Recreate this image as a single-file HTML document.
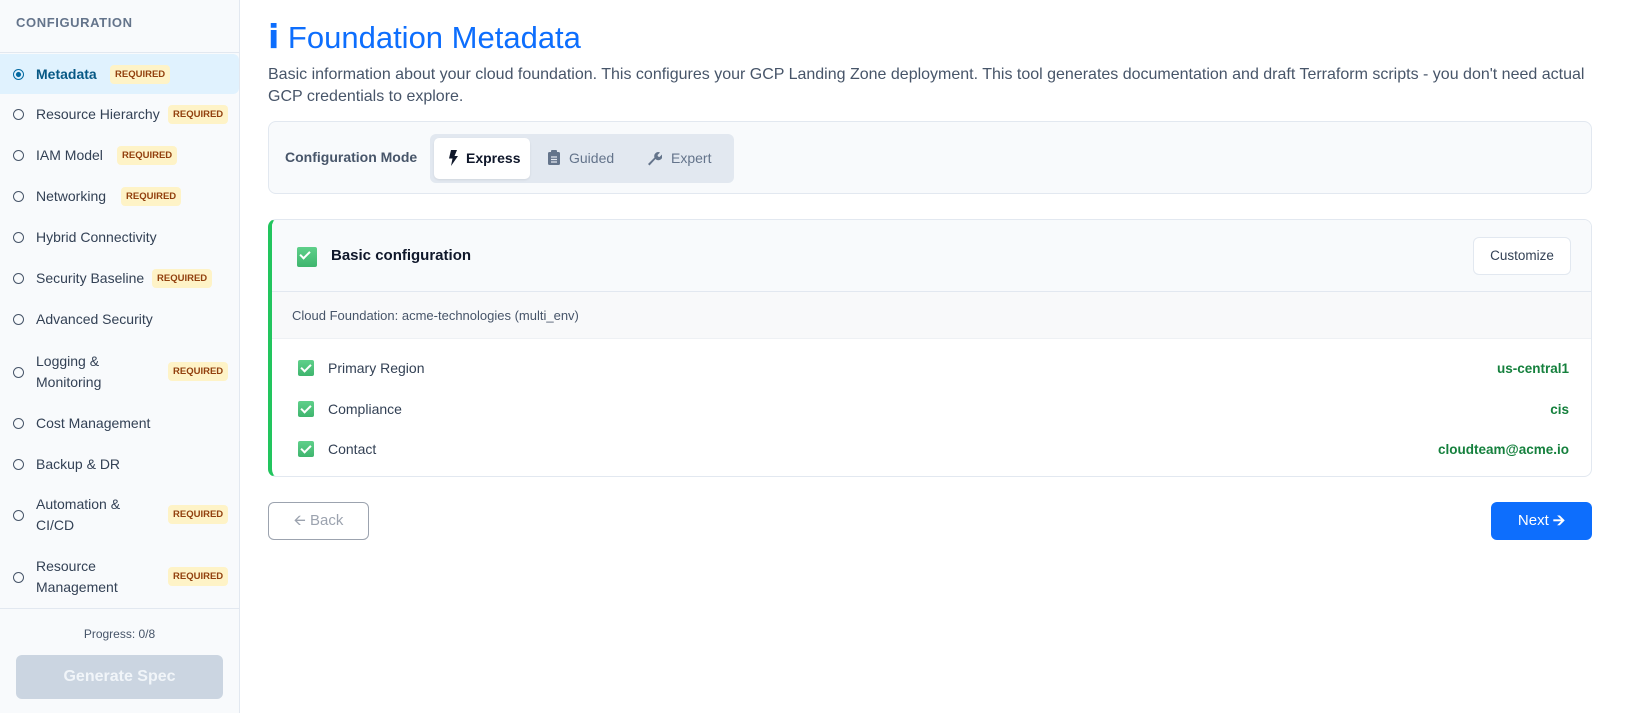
<!DOCTYPE html>
<html><head><meta charset="utf-8"><style>
*{box-sizing:border-box;margin:0;padding:0}
body{width:1632px;height:713px;overflow:hidden;background:#fff;font-family:"Liberation Sans",sans-serif;position:relative;color:#1e293b}
.sb{position:absolute;left:0;top:0;width:240px;height:713px;background:#f8fafc;border-right:1px solid #e2e8f0}
.sbh{position:absolute;left:16px;top:15px;font-size:13px;font-weight:bold;color:#64748b;letter-spacing:.6px}
.line{position:absolute;left:0;width:239px;height:1px;background:#e2e8f0}
.it{position:absolute;left:0;width:239px;display:flex;align-items:center;font-size:14px;color:#334155;line-height:21px}
.it .r{position:absolute;left:13px;width:11px;height:11px;border:1.5px solid #475569;border-radius:50%}
.it .t{position:absolute;left:36px}
.badge{position:absolute;background:#fef3c7;color:#92400e;font-size:9.5px;font-weight:bold;padding:0 5px;height:19px;line-height:19px;border-radius:4px}
.act{background:#e0f2fe;border-radius:0 6px 6px 0;height:40px}
.card{position:absolute;border:1px solid #e2e8f0;border-radius:8px}
.chk{position:absolute;width:16px;height:16px;border-radius:2px;background:linear-gradient(#5fd08a,#3fb56e)}
.chk:after{content:"";position:absolute;left:5px;top:2px;width:4px;height:8px;border:solid #fff;border-width:0 2px 2px 0;transform:rotate(45deg)}
.val{position:absolute;right:22px;font-size:13.5px;font-weight:bold;color:#15803d}
.lbl{position:absolute;left:56px;font-size:14px;color:#334155}
</style></head><body>
<div class="sb">
<div class="sbh">CONFIGURATION</div>
<div class="line" style="top:52px"></div>
<div class="it act" style="top:54px"><span class="r" style="border-color:#0369a1;background:radial-gradient(#0369a1 35%,transparent 45%)"></span><span class="t" style="color:#075985;font-weight:bold">Metadata</span><span class="badge" style="left:110px">REQUIRED</span></div>
<div class="it" style="top:104px;height:21px"><span class="r"></span><span class="t">Resource Hierarchy</span><span class="badge" style="left:168px;top:1px">REQUIRED</span></div>
<div class="it" style="top:145px;height:21px"><span class="r"></span><span class="t">IAM Model</span><span class="badge" style="left:117px;top:1px">REQUIRED</span></div>
<div class="it" style="top:186px;height:21px"><span class="r"></span><span class="t">Networking</span><span class="badge" style="left:121px;top:1px">REQUIRED</span></div>
<div class="it" style="top:227px;height:21px"><span class="r"></span><span class="t">Hybrid Connectivity</span></div>
<div class="it" style="top:268px;height:21px"><span class="r"></span><span class="t">Security Baseline</span><span class="badge" style="left:152px;top:1px">REQUIRED</span></div>
<div class="it" style="top:309px;height:21px"><span class="r"></span><span class="t">Advanced Security</span></div>
<div class="it" style="top:351px;height:42px"><span class="r"></span><span class="t">Logging &amp;<br>Monitoring</span><span class="badge" style="left:168px;top:11px">REQUIRED</span></div>
<div class="it" style="top:413px;height:21px"><span class="r"></span><span class="t">Cost Management</span></div>
<div class="it" style="top:454px;height:21px"><span class="r"></span><span class="t">Backup &amp; DR</span></div>
<div class="it" style="top:494px;height:42px"><span class="r"></span><span class="t">Automation &amp;<br>CI/CD</span><span class="badge" style="left:168px;top:11px">REQUIRED</span></div>
<div class="it" style="top:556px;height:42px"><span class="r"></span><span class="t">Resource<br>Management</span><span class="badge" style="left:168px;top:11px">REQUIRED</span></div>
<div class="line" style="top:608px"></div>
<div style="position:absolute;left:0;width:239px;top:627px;text-align:center;font-size:12px;color:#475569">Progress: 0/8</div>
<div style="position:absolute;left:16px;top:655px;width:207px;height:44px;background:#cbd5e1;border-radius:6px;color:#f1f5f9;font-weight:bold;font-size:16px;text-align:center;line-height:44px">Generate Spec</div>
</div>

<div style="position:absolute;left:268px;top:17px;font-size:31px;color:#0d6efd;line-height:40px;white-space:nowrap"><span style="font-family:'DejaVu Sans',sans-serif;font-weight:bold;font-size:33px">i</span> Foundation Metadata</div>
<div style="position:absolute;left:268px;top:64px;width:1324px;font-size:16px;line-height:22px;color:#475569">Basic information about your cloud foundation. This configures your GCP Landing Zone deployment. This tool generates documentation and draft Terraform scripts - you don't need actual GCP credentials to explore.</div>

<div class="card" style="left:268px;top:121px;width:1324px;height:73px;background:#f8fafc">
<div style="position:absolute;left:16px;top:27px;font-size:14px;font-weight:bold;color:#475569">Configuration Mode</div>
<div style="position:absolute;left:161px;top:12px;width:304px;height:49px;background:#e2e8f0;border-radius:6px">
<div style="position:absolute;left:4px;top:4px;width:96px;height:41px;background:#fff;border-radius:5px;box-shadow:0 1px 2px rgba(0,0,0,.08);font-size:14px;font-weight:bold;color:#0f172a;line-height:41px;padding-left:14px"><svg width="11" height="16" viewBox="0 0 11 16" style="vertical-align:-3px;margin-right:7px"><path d="M3 0h6L6.5 6H10L3 16l1.5-7.5H1z" fill="#0f172a"/></svg>Express</div>
<div style="position:absolute;left:118px;top:4px;height:41px;font-size:14px;color:#64748b;line-height:41px"><svg width="12" height="15" viewBox="0 0 12 15" style="vertical-align:-2px;margin-right:9px"><rect x="0" y="2" width="12" height="13" rx="1.5" fill="#64748b"/><rect x="3" y="0" width="6" height="4" rx="1" fill="#64748b"/><path d="M3 7h6M3 9.5h6M3 12h6" stroke="#e2e8f0" stroke-width="1.2"/></svg>Guided</div>
<div style="position:absolute;left:216px;top:4px;height:41px;font-size:14px;color:#64748b;line-height:41px"><svg width="16" height="16" viewBox="0 0 16 16" style="vertical-align:-3px;margin-right:9px"><path d="M2 14L8.5 7.5A4 4 0 0 1 14 2.5L11.5 5 12 6.5 13.5 7 16 4.5A4 4 0 0 1 9.5 9L3.5 15.5z" fill="#64748b"/></svg>Expert</div>
</div>
</div>

<div class="card" style="left:268px;top:219px;width:1324px;height:258px;border-left:4px solid #22c55e;overflow:hidden">
<div style="position:absolute;left:0;top:0;right:0;height:72px;background:#f8fafc;border-bottom:1px solid #e2e8f0">
<div class="chk" style="left:25px;top:27px;width:20px;height:20px"></div>
<div style="position:absolute;left:59px;top:27px;font-size:15px;font-weight:bold;color:#0f172a">Basic configuration</div>
<div style="position:absolute;right:20px;top:17px;width:98px;height:38px;background:#fff;border:1px solid #e2e8f0;border-radius:6px;text-align:center;line-height:36px;font-size:13.5px;color:#334155">Customize</div>
</div>
<div style="position:absolute;left:0;top:72px;right:0;height:47px;background:#f8f9fa;border-bottom:1px solid #eef1f4;font-size:13px;color:#475569;line-height:47px;padding-left:20px">Cloud Foundation: acme-technologies (multi_env)</div>
<div class="chk" style="left:26px;top:140px"></div><div class="lbl" style="top:140px">Primary Region</div><div class="val" style="top:141px">us-central1</div>
<div class="chk" style="left:26px;top:181px"></div><div class="lbl" style="top:181px">Compliance</div><div class="val" style="top:182px">cis</div>
<div class="chk" style="left:26px;top:221px"></div><div class="lbl" style="top:221px">Contact</div><div class="val" style="top:222px">cloudteam@acme.io</div>
</div>

<div style="position:absolute;left:268px;top:502px;width:101px;height:38px;border:1px solid #9ca3af;border-radius:6px;color:#9ca3af;font-size:15px;text-align:center;line-height:36px">&#129128; Back</div>
<div style="position:absolute;left:1491px;top:502px;width:101px;height:38px;background:#0d6efd;border-radius:6px;color:#fff;font-size:15px;text-align:center;line-height:38px">Next <b>&#129130;</b></div>
</body></html>
